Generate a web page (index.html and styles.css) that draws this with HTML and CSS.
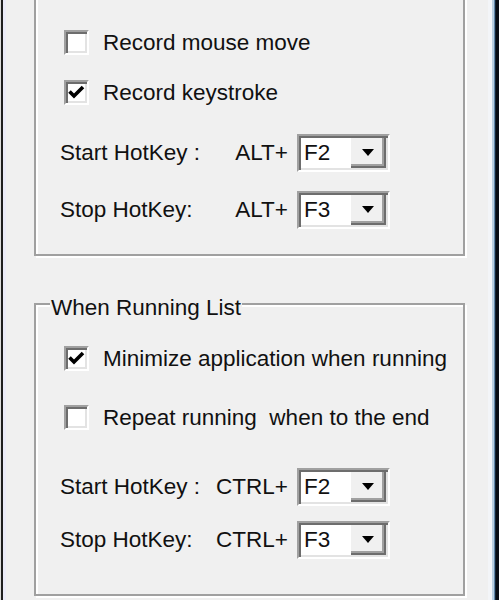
FILE: index.html
```html
<!DOCTYPE html>
<html lang="en">
<head>
<meta charset="utf-8">
<title>Recorder Options</title>
<link rel="stylesheet" href="styles.css">
</head>
<body>
<div class="window">
  <div class="edge edge-left"></div>
  <div class="client">
    <section class="group group-record">
      <label class="check">
        <span class="box"></span>
        <span class="check-text">Record mouse move</span>
      </label>
      <label class="check check-second">
        <span class="box"><svg class="tick" viewBox="0 0 25 25"><path d="M5.5 11.5 L10 16 L19 7"/></svg></span>
        <span class="check-text">Record keystroke</span>
      </label>
      <div class="hotkey hotkey-first">
        <span class="hk-label">Start HotKey :</span>
        <span class="hk-mod">ALT+</span>
        <div class="combo"><span class="combo-value">F2</span><span class="combo-btn"><span class="arrow"></span></span></div>
      </div>
      <div class="hotkey hotkey-second">
        <span class="hk-label">Stop HotKey:</span>
        <span class="hk-mod">ALT+</span>
        <div class="combo"><span class="combo-value">F3</span><span class="combo-btn"><span class="arrow"></span></span></div>
      </div>
    </section>

    <fieldset class="group group-running">
      <legend>When Running List</legend>
      <label class="check">
        <span class="box"><svg class="tick" viewBox="0 0 25 25"><path d="M5.5 11.5 L10 16 L19 7"/></svg></span>
        <span class="check-text">Minimize application when running</span>
      </label>
      <label class="check check-second">
        <span class="box"></span>
        <span class="check-text">Repeat running&nbsp; when to the end</span>
      </label>
      <div class="hotkey hotkey-first">
        <span class="hk-label">Start HotKey :</span>
        <span class="hk-mod">CTRL+</span>
        <div class="combo"><span class="combo-value">F2</span><span class="combo-btn"><span class="arrow"></span></span></div>
      </div>
      <div class="hotkey hotkey-second">
        <span class="hk-label">Stop HotKey:</span>
        <span class="hk-mod">CTRL+</span>
        <div class="combo"><span class="combo-value">F3</span><span class="combo-btn"><span class="arrow"></span></span></div>
      </div>
    </fieldset>
  </div>
  <div class="edge edge-right"></div>
</div>
</body>
</html>
```

FILE: styles.css
```css
html, body {
  margin: 0;
  padding: 0;
  background: #f0f0f0;
  overflow: hidden;
}

body {
  font-family: "Liberation Sans", Arial, sans-serif;
  font-size: 22.5px;
  color: #111;
}

.window {
  display: flex;
  width: 499px;
  height: 600px;
  overflow: hidden;
}

/* window frame edges */
.edge {
  flex: none;
}

.edge-left {
  width: 6px;
  background: linear-gradient(to right, #dcdcdc 0 1px, #1e1e1e 1px 3px, #ebebf7 3px 6px);
}

.edge-right {
  width: 11px;
  background: linear-gradient(to right, #f3f5f8 0 4px, #b9cfe0 4px 6px, #5f86a8 6px 7px, #142434 7px 8px, #060b12 8px);
}

.client {
  flex: 1;
  padding-left: 28px;
}

/* etched group frame */
.group {
  box-sizing: border-box;
  width: 431px;
  margin: 0;
  border: 2px solid #a0a0a0;
  box-shadow: inset 2px 2px 0 #fff, 2px 2px 0 #fff;
  min-width: 0;
}

.group-record {
  margin-top: -30px;
  padding: 58px 0 25px;
}

.group-running {
  margin-top: 31px;
  padding: 26px 0 35px;
}

.group-running legend {
  margin-left: 14px;
  padding: 8px 1px 0;
  line-height: 25px;
  background: #f0f0f0;
}

/* checkbox rows */
.check {
  display: flex;
  align-items: center;
  height: 25px;
  padding-left: 28px;
}

.group-record .check-second {
  margin-top: 25px;
}

.group-running .check-second {
  margin-top: 34px;
}

.box {
  box-sizing: border-box;
  flex: none;
  width: 25px;
  height: 25px;
  background: #fff;
  border-style: solid;
  border-width: 2px;
  border-color: #a0a0a0 #fff #fff #a0a0a0;
  box-shadow: inset 2px 2px 0 #6d6d6d, inset -2px -2px 0 #e3e3e3;
  position: relative;
}

.tick {
  position: absolute;
  left: -2px;
  top: -2px;
  width: 25px;
  height: 25px;
}

.tick path {
  fill: none;
  stroke: #000;
  stroke-width: 3.6;
}

.check-text {
  margin-left: 14px;
  white-space: nowrap;
}

/* hotkey rows */
.hotkey {
  display: grid;
  grid-template-columns: 1fr auto auto;
  align-items: center;
  width: 330px;
  height: 38px;
  padding-left: 24px;
}

.group-record .hotkey-first {
  margin-top: 29px;
}

.group-running .hotkey-first {
  margin-top: 38px;
}

.hotkey-second {
  margin-top: 19px;
}

.group-running .hotkey-second {
  margin-top: 15px;
}

.hk-label {
  white-space: nowrap;
}

.hk-mod {
  margin-right: 9px;
}

/* drop-down list */
.combo {
  box-sizing: border-box;
  display: flex;
  width: 93px;
  height: 38px;
  background: #fff;
  border-style: solid;
  border-width: 2px;
  border-color: #a0a0a0 #fff #fff #a0a0a0;
  box-shadow: inset 2px 2px 0 #6d6d6d, inset -2px -2px 0 #e3e3e3;
}

.combo-value {
  flex: 1;
  padding: 2px 0 0 5px;
  line-height: 30px;
}

.combo-btn {
  box-sizing: border-box;
  flex: none;
  width: 35px;
  margin: 2px 2px 2px 0;
  background: #f0f0f0;
  border-right: 2px solid #6d6d6d;
  border-bottom: 2px solid #6d6d6d;
  box-shadow: inset -2px -2px 0 #a0a0a0;
  display: flex;
  align-items: center;
  justify-content: center;
}

.arrow {
  width: 0;
  height: 0;
  border-left: 6px solid transparent;
  border-right: 6px solid transparent;
  border-top: 7px solid #000;
}
```
